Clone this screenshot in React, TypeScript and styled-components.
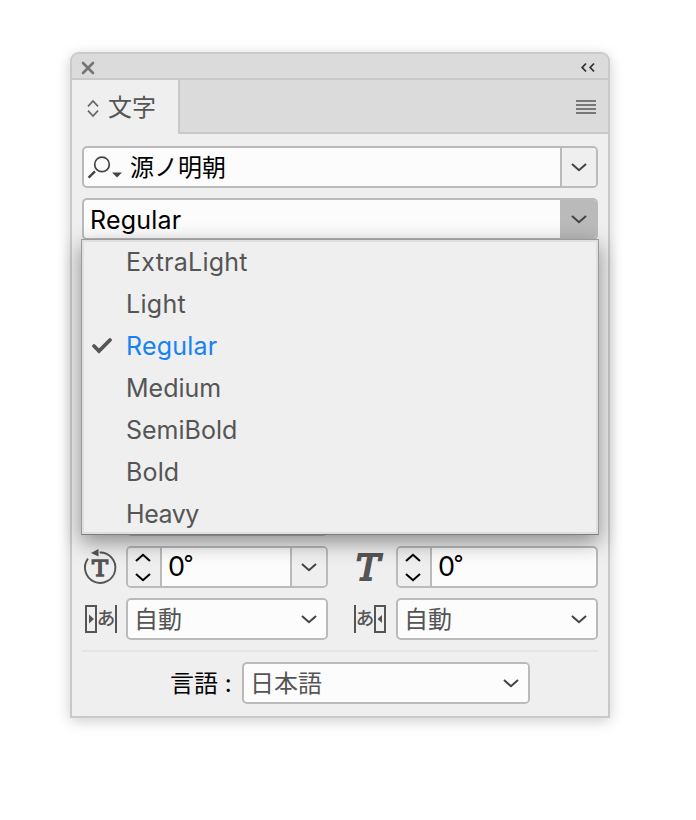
import React from "react";
import styled, { createGlobalStyle } from "styled-components";

const GlobalStyle = createGlobalStyle`
  * { box-sizing: border-box; }
  body {
    margin: 0;
    background: #fff;
    font-family: Inter, "Noto Sans CJK JP", sans-serif;
    font-size: 24px;
    line-height: 40px;
    color: #000;
  }
  svg { display: block; flex: none; overflow: visible; }
`;

const Page = styled.main`
  height: 820px;
  padding: 52px 86px 0 70px;
  overflow: hidden;
`;

const Panel = styled.section`
  width: 540px;
  height: 666px;
  border: 2px solid #c9c9c9;
  border-radius: 9px 9px 0 0;
  background: #efefef;
  box-shadow: 0 3px 14px rgba(0, 0, 0, 0.2);
`;

const TitleBar = styled.header`
  display: flex;
  align-items: center;
  justify-content: space-between;
  height: 26px;
  padding: 3px 13px 0 10px;
  border-bottom: 2px solid #c9c9c9;
  border-radius: 7px 7px 0 0;
  background: #dbdbdb;
`;

const TabBar = styled.div`
  display: flex;
  height: 54px;
`;

const Tab = styled.div`
  display: flex;
  align-items: center;
  gap: 9px;
  width: 106px;
  padding: 2px 0 0 15px;
  color: #555;
`;

const TabSpace = styled.div`
  flex: 1;
  display: flex;
  justify-content: flex-end;
  padding: 20px 12px 0 0;
  border-left: 2px solid #c9c9c9;
  border-bottom: 2px solid #c9c9c9;
  background: #dbdbdb;
`;

const Body = styled.div`
  display: flex;
  flex-direction: column;
  gap: 10px;
  padding: 12px 10px 0;
`;

const Field = styled.div<{ $width?: number; $muted?: boolean }>`
  display: flex;
  width: ${(p) => (p.$width ? `${p.$width}px` : "100%")};
  height: 42px;
  border: 2px solid #bababa;
  border-radius: 5px;
  background: #fcfcfc;
  color: ${(p) => (p.$muted ? "#555" : "#000")};
  overflow: hidden;
`;

const Value = styled.span<{ $inset?: number }>`
  flex: 1;
  padding-left: ${(p) => p.$inset ?? 6}px;
  white-space: nowrap;
`;

const Latin = styled.span<{ $tracking?: number }>`
  font-family: Inter, sans-serif;
  font-size: 25px;
  font-weight: 375;
  letter-spacing: ${(p) => p.$tracking ?? 0}px;
`;

const Degrees = styled.span`
  display: flex;
  font-size: 27px;
  font-weight: 375;
  line-height: 38px;
  letter-spacing: -1.5px;
`;

const DegreeSign = styled.span`
  font-size: 22px;
  line-height: 31px;
`;

const ArrowCell = styled.span<{ $tone: "plain" | "button" | "pressed" }>`
  display: flex;
  align-items: center;
  justify-content: center;
  width: ${(p) => (p.$tone === "plain" ? 34 : 36)}px;
  border-left: ${(p) => (p.$tone === "plain" ? "0" : "2px solid #bababa")};
  background: ${(p) => ({ plain: "#fcfcfc", button: "#efefef", pressed: "#bababa" })[p.$tone]};
`;

const Spinner = styled.span`
  display: flex;
  flex-direction: column;
  align-items: center;
  justify-content: space-between;
  width: 34px;
  padding: 5px 2px 4px 0;
  border-right: 2px solid #bababa;
  background: #efefef;
`;

const SearchMark = styled.span`
  display: flex;
  align-items: center;
  width: 38px;
  padding: 1px 0 0 2px;
`;

const StyleRow = styled.div`
  position: relative;
`;

const Menu = styled.ul`
  position: absolute;
  z-index: 2;
  top: 41px;
  left: -1px;
  width: 518px;
  height: 296px;
  margin: 0;
  padding: 1px 0 0;
  list-style: none;
  border: 1px solid #9b9b9b;
  border-bottom-color: #7c7c7c;
  background: #efefef;
  box-shadow: inset 0 0 0 2px #dfdfdf, 0 7px 20px rgba(0, 0, 0, 0.42);
`;

const MenuItem = styled.li<{ $selected: boolean }>`
  display: flex;
  align-items: center;
  height: 42px;
  padding-left: 10px;
  line-height: 44px;
  color: ${(p) => (p.$selected ? "#1683f5" : "#555")};
`;

const CheckSlot = styled.span`
  width: 34px;
`;

const Grid = styled.div`
  display: grid;
  grid-template-columns: 246px 270px;
  row-gap: 10px;
  padding-top: 244px;
`;

const Control = styled.div<{ $second?: boolean }>`
  display: flex;
  align-items: center;
  gap: 8px;
  height: 42px;
  padding-left: ${(p) => (p.$second ? 24 : 0)}px;
`;

const Divider = styled.hr`
  width: 100%;
  height: 2px;
  margin: 0;
  border: 0;
  background: #e5e5e5;
`;

const LanguageRow = styled.div`
  display: flex;
  align-items: center;
  padding-left: 88px;
`;

const LanguageLabel = styled.span`
  width: 72px;
  padding-top: 2px;
  white-space: nowrap;
`;

const Chevron = ({ up = false, color = "#444" }: { up?: boolean; color?: string }) => (
  <svg width="16" height="9" viewBox="0 0 16 9" fill="none" stroke={color} strokeWidth="2.1">
    <path d={up ? "M1 8 8 1.8 15 8" : "M1 1 8 7.2 15 1"} />
  </svg>
);

const CloseIcon = () => (
  <svg width="12" height="12" viewBox="0 0 12 12" stroke="#757575" strokeWidth="2.6" strokeLinecap="round">
    <path d="M1 1 11 11M11 1 1 11" />
  </svg>
);

const CollapseIcon = () => (
  <svg width="14" height="10" viewBox="0 0 14 10" fill="none" stroke="#333" strokeWidth="1.8">
    <path d="M5 .5 1.2 4.5 5 8.5M13 .5 9.2 4.5 13 8.5" />
  </svg>
);

const SortIcon = () => (
  <svg width="12" height="18" viewBox="0 0 12 18" fill="none" stroke="#666" strokeWidth="1.7">
    <path d="M1 7.3 6 2 11 7.3M1 11.7 6 17 11 11.7" />
  </svg>
);

const MenuIcon = () => (
  <svg width="20" height="14" viewBox="0 0 20 14" fill="#777">
    <path d="M0 0H20V2H0ZM0 4H20V6H0ZM0 8H20V10H0ZM0 12H20V14H0Z" />
  </svg>
);

const SearchIcon = () => (
  <svg width="35" height="24" viewBox="0 0 35 24" fill="none" stroke="#444">
    <circle cx="16" cy="8.4" r="7.3" strokeWidth="1.7" />
    <path d="m9 15.3-6.4 6.3" strokeWidth="2.4" />
    <path d="M26 16.5H36L31 21.5Z" fill="#444" stroke="none" />
  </svg>
);

const CheckIcon = () => (
  <svg width="20" height="16" viewBox="0 0 20 16" fill="none" stroke="#555" strokeWidth="3.8" strokeLinecap="round">
    <path d="m2 8 5 5L18 2" />
  </svg>
);

const RotateIcon = () => (
  <svg width="36" height="38" viewBox="0 0 36 38">
    <path d="M5.3 11A15.2 15.2 0 1 0 17 4.9" transform="translate(.7 -.4)" fill="none" stroke="#555" strokeWidth="1.9" />
    <path d="M9 5 16.5 1V8.5Z" fill="#555" />
    <text x="10" y="27.5" fontFamily="DejaVu Serif" fontSize="22" textLength="16" lengthAdjust="spacingAndGlyphs" fill="#555" stroke="#555" strokeWidth="1.3">T</text>
  </svg>
);

const SkewIcon = () => (
  <svg width="36" height="38" viewBox="0 0 36 38">
    <text x="4" y="32" fontFamily="DejaVu Serif" fontStyle="italic" fontSize="36" textLength="24" lengthAdjust="spacingAndGlyphs" fill="#555" stroke="#555" strokeWidth="2">T</text>
  </svg>
);

const SpacingIcon = ({ after = false }: { after?: boolean }) => (
  <svg width="36" height="30" viewBox="0 0 36 30">
    <path d={after ? "M23 2H33V28H23Z" : "M4 2H14V28H4Z"} fill="none" stroke="#555" strokeWidth="2" />
    <path d={after ? "M30 11V19L25.5 15Z" : "M7 10.5V19.5L12 15Z"} fill="#555" />
    <path d={after ? "M3 1V29" : "M34 1V29"} stroke="#555" strokeWidth="2" />
    <text x={after ? 13 : 24} y="21" textAnchor="middle" fontFamily="Noto Sans CJK JP" fontWeight="500" fontSize="18.5" fill="#555">あ</text>
  </svg>
);

const weights = [
  { name: "ExtraLight", tracking: 0.25 },
  { name: "Light", tracking: 0.3 },
  { name: "Regular", tracking: 0.2 },
  { name: "Medium", tracking: 0 },
  { name: "SemiBold", tracking: 0 },
  { name: "Bold", tracking: 0.15 },
  { name: "Heavy", tracking: -0.45 },
];
const current = "Regular";

const AutoSelect = ({ width, value }: { width: number; value: string }) => (
  <Field $width={width} $muted>
    <Value>{value}</Value>
    <ArrowCell $tone="plain"><Chevron /></ArrowCell>
  </Field>
);

const AngleField = ({ width, dropdown = false }: { width: number; dropdown?: boolean }) => (
  <Field $width={width}>
    <Spinner><Chevron up color="#000" /><Chevron color="#000" /></Spinner>
    <Value><Degrees>0<DegreeSign>°</DegreeSign></Degrees></Value>
    {dropdown && <ArrowCell $tone="button"><Chevron /></ArrowCell>}
  </Field>
);

export default function App() {
  return (
    <Page>
      <GlobalStyle />
      <Panel>
        <TitleBar><CloseIcon /><CollapseIcon /></TitleBar>
        <TabBar>
          <Tab><SortIcon />文字</Tab>
          <TabSpace><MenuIcon /></TabSpace>
        </TabBar>
        <Body>
          <Field>
            <SearchMark><SearchIcon /></SearchMark>
            <Value $inset={8}>源ノ明朝</Value>
            <ArrowCell $tone="button"><Chevron /></ArrowCell>
          </Field>
          <StyleRow>
            <Field>
              <Value $inset={6}><Latin $tracking={0.2}>{current}</Latin></Value>
              <ArrowCell $tone="pressed"><Chevron /></ArrowCell>
            </Field>
            <Menu>
              {weights.map(({ name, tracking }) => (
                <MenuItem key={name} $selected={name === current}>
                  <CheckSlot>{name === current && <CheckIcon />}</CheckSlot>
                  <Latin $tracking={tracking}>{name}</Latin>
                </MenuItem>
              ))}
            </Menu>
          </StyleRow>
          <Grid>
            <Control><SpacingIcon /><Field $width={202} /></Control>
            <Control $second />
            <Control><RotateIcon /><AngleField width={202} dropdown /></Control>
            <Control $second><SkewIcon /><AngleField width={202} /></Control>
            <Control><SpacingIcon /><AutoSelect width={202} value="自動" /></Control>
            <Control $second><SpacingIcon after /><AutoSelect width={202} value="自動" /></Control>
          </Grid>
          <Divider />
          <LanguageRow>
            <LanguageLabel>言語 :</LanguageLabel>
            <AutoSelect width={288} value="日本語" />
          </LanguageRow>
        </Body>
      </Panel>
    </Page>
  );
}
